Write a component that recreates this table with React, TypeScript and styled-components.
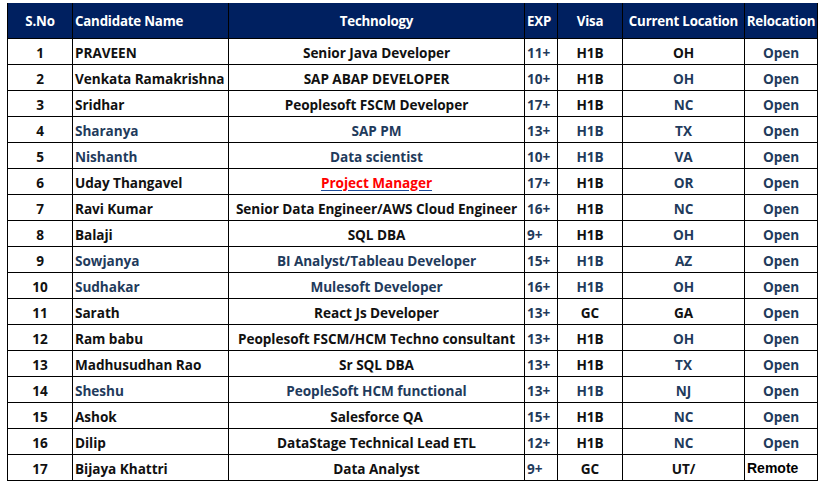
import React from 'react';
import styled, { createGlobalStyle } from 'styled-components';

const NAVY = '#002060';
const BLUE = '#1f3b5c';
const INK = '#111111';

const GlobalStyle = createGlobalStyle`
  html, body {
    margin: 0;
    padding: 0;
    background: #ffffff;
  }
  body {
    font-family: "Open Sans", Lato, sans-serif;
  }
`;

const Page = styled.div`
  padding: 3px 0 0 7px;
`;

const Grid = styled.div`
  display: grid;
  grid-template-columns: 65px 156px 296px 33px 65px 122px 73px;
  grid-template-rows: 36px;
  grid-auto-rows: 26px;
  width: 810px;
  border-left: 1px solid #000;
`;

const HeadCell = styled.div<{ $align?: string }>`
  display: flex;
  align-items: center;
  justify-content: ${(p) => p.$align || 'center'};
  padding: 0 2px;
  background: ${NAVY};
  color: #ffffff;
  font-weight: 700;
  font-size: 13.3px;
  letter-spacing: -0.2px;
  white-space: nowrap;
  border-right: 1px solid #000;
  border-bottom: 1px solid #000;
  box-sizing: border-box;
`;

const Cell = styled.div<{ $align?: string; $color?: string }>`
  display: flex;
  align-items: center;
  justify-content: ${(p) => p.$align || 'center'};
  padding: 1px 2px 0;
  color: ${(p) => p.$color || INK};
  font-weight: 700;
  font-size: 13.6px;
  letter-spacing: -0.05px;
  white-space: nowrap;
  border-right: 1px solid #000;
  border-bottom: 1px solid #000;
  box-sizing: border-box;
`;

const LinkText = styled.span`
  color: #ff0000;
  text-decoration: underline;
  text-decoration-color: #1f4e9c;
  text-underline-offset: 2px;
`;

const RemoteText = styled.span`
  font-family: "Liberation Sans", Arial, sans-serif;
  color: #000;
  font-size: 14px;
  letter-spacing: 0;
`;

interface Row {
  name: string;
  tech: string;
  exp: string;
  visa: string;
  loc: string;
  hl?: boolean;
  locBlack?: boolean;
  link?: boolean;
  remote?: boolean;
}

const rows: Row[] = [
  { name: 'PRAVEEN', tech: 'Senior Java Developer', exp: '11+', visa: 'H1B', loc: 'OH', locBlack: true },
  { name: 'Venkata Ramakrishna', tech: 'SAP ABAP DEVELOPER', exp: '10+', visa: 'H1B', loc: 'OH' },
  { name: 'Sridhar', tech: 'Peoplesoft FSCM Developer', exp: '17+', visa: 'H1B', loc: 'NC' },
  { name: 'Sharanya', tech: 'SAP PM', exp: '13+', visa: 'H1B', loc: 'TX', hl: true },
  { name: 'Nishanth', tech: 'Data scientist', exp: '10+', visa: 'H1B', loc: 'VA', hl: true },
  { name: 'Uday Thangavel', tech: 'Project Manager', exp: '17+', visa: 'H1B', loc: 'OR', link: true },
  { name: 'Ravi Kumar', tech: 'Senior Data Engineer/AWS Cloud Engineer', exp: '16+', visa: 'H1B', loc: 'NC' },
  { name: 'Balaji', tech: 'SQL DBA', exp: '9+', visa: 'H1B', loc: 'OH' },
  { name: 'Sowjanya', tech: 'BI Analyst/Tableau Developer', exp: '15+', visa: 'H1B', loc: 'AZ', hl: true },
  { name: 'Sudhakar', tech: 'Mulesoft Developer', exp: '16+', visa: 'H1B', loc: 'OH', hl: true },
  { name: 'Sarath', tech: 'React Js Developer', exp: '13+', visa: 'GC', loc: 'GA', locBlack: true },
  { name: 'Ram babu', tech: 'Peoplesoft FSCM/HCM Techno consultant', exp: '13+', visa: 'H1B', loc: 'OH' },
  { name: 'Madhusudhan Rao', tech: 'Sr SQL DBA', exp: '13+', visa: 'H1B', loc: 'TX' },
  { name: 'Sheshu', tech: 'PeopleSoft HCM functional', exp: '13+', visa: 'H1B', loc: 'NJ', hl: true },
  { name: 'Ashok', tech: 'Salesforce QA', exp: '15+', visa: 'H1B', loc: 'NC' },
  { name: 'Dilip', tech: 'DataStage Technical Lead ETL', exp: '12+', visa: 'H1B', loc: 'NC' },
  { name: 'Bijaya Khattri', tech: 'Data Analyst', exp: '9+', visa: 'GC', loc: 'UT/', locBlack: true, remote: true },
];

const App = () => {
  return (
    <Page>
      <GlobalStyle />
      <Grid>
        <HeadCell>S.No</HeadCell>
        <HeadCell $align="flex-start">Candidate Name</HeadCell>
        <HeadCell>Technology</HeadCell>
        <HeadCell $align="flex-start">EXP</HeadCell>
        <HeadCell>Visa</HeadCell>
        <HeadCell>Current Location</HeadCell>
        <HeadCell>Relocation</HeadCell>
        {rows.map((r, i) => {
          const text = r.hl ? BLUE : INK;
          return (
            <React.Fragment key={i}>
              <Cell>{i + 1}</Cell>
              <Cell $align="flex-start" $color={text}>{r.name}</Cell>
              <Cell $color={text}>
                {r.link ? <LinkText>{r.tech}</LinkText> : r.tech}
              </Cell>
              <Cell $align="flex-start" $color={BLUE}>{r.exp}</Cell>
              <Cell $color={text}>{r.visa}</Cell>
              <Cell $color={r.locBlack ? INK : BLUE}>{r.loc}</Cell>
              {r.remote ? (
                <Cell $align="flex-start">
                  <RemoteText>Remote</RemoteText>
                </Cell>
              ) : (
                <Cell $color={BLUE}>Open</Cell>
              )}
            </React.Fragment>
          );
        })}
      </Grid>
    </Page>
  );
};

export default App;
